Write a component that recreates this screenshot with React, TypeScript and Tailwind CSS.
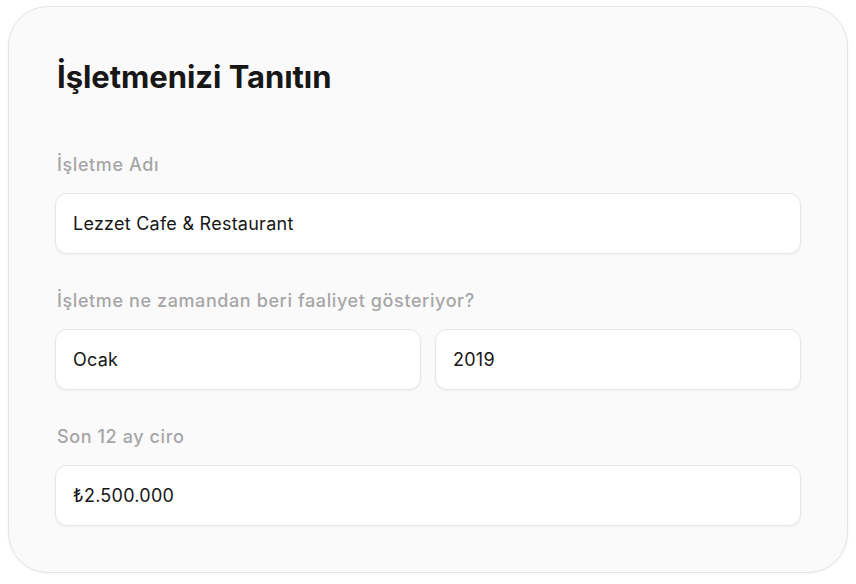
import React from "react";

const fieldClass =
  "h-[61px] w-full rounded-[12px] border border-[#e6e6e6] bg-white px-[17px] text-[18px] tracking-[0.25px] text-[#171717] shadow-[0_1px_2px_rgba(0,0,0,0.05)] outline-none";

function Label({ children }: { children: React.ReactNode }) {
  return (
    <label className="mb-[14px] ml-[2px] block text-[18px] font-medium leading-[28px] tracking-[0.6px] text-[#a6a6a6]">
      {children}
    </label>
  );
}

export default function App() {
  return (
    <div
      className="min-h-screen bg-white px-2 pt-[6px]"
      style={{ fontFamily: "Inter, 'Noto Sans', sans-serif" }}
    >
      <div className="w-[840px] rounded-[40px] border border-[#e4e4e4] bg-[#fafafa] px-[46px] pt-[50px] pb-[46px] shadow-[0_1px_3px_rgba(0,0,0,0.04)]">
        <h1 className="mb-[54px] ml-[2px] text-[31px] font-bold leading-[40px] tracking-[-0.05px] text-[#171717]">
          İşletmenizi Tanıtın
        </h1>

        <div className="flex flex-col gap-[33px]">
          <div>
            <Label>İşletme Adı</Label>
            <input className={fieldClass} defaultValue="Lezzet Cafe & Restaurant" readOnly />
          </div>

          <div>
            <Label>İşletme ne zamandan beri faaliyet gösteriyor?</Label>
            <div className="flex gap-[14px]">
              <input className={fieldClass} defaultValue="Ocak" readOnly />
              <input className={fieldClass} defaultValue="2019" readOnly />
            </div>
          </div>

          <div>
            <Label>Son 12 ay ciro</Label>
            <input className={fieldClass} defaultValue="₺2.500.000" readOnly />
          </div>
        </div>
      </div>
    </div>
  );
}
